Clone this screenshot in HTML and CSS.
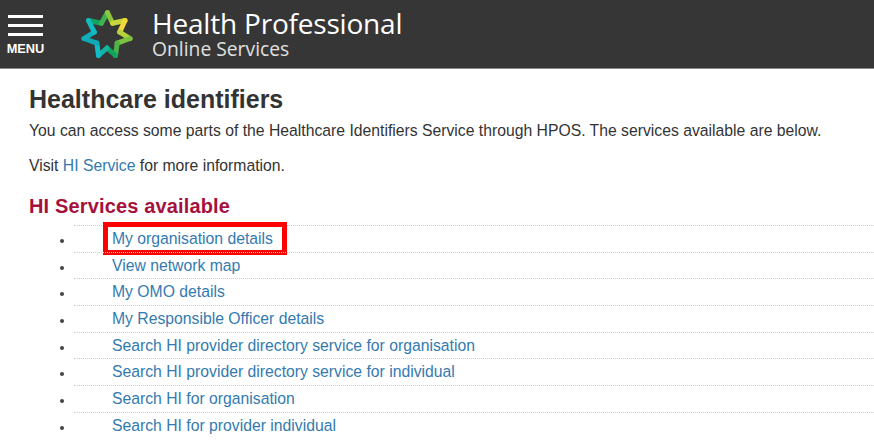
FILE: index.html
```html
<!DOCTYPE html>
<html lang="en">
<head>
<meta charset="utf-8">
<title>Healthcare identifiers</title>
<link rel="stylesheet" href="styles.css">
</head>
<body>
<header class="topbar">
  <div class="menu">
    <span class="menu-bar"></span>
    <span class="menu-bar"></span>
    <span class="menu-bar"></span>
    <span class="menu-label">MENU</span>
  </div>
  <svg class="star" width="54" height="54" viewBox="80 8 54 54" aria-hidden="true">
    <g fill="none" stroke-width="5" stroke-linecap="round">
      <line x1="88.5" y1="20.5" x2="101.4" y2="23.3" stroke="#12a35f"/>
      <line x1="101.4" y1="23.3" x2="107.5" y2="12.5" stroke="#3fb24f"/>
      <line x1="107.5" y1="12.5" x2="112.6" y2="23.3" stroke="#8cc63f"/>
      <line x1="112.6" y1="23.3" x2="125" y2="20.5" stroke="#c8d63a"/>
      <line x1="125" y1="20.5" x2="119.7" y2="32.1" stroke="#f3d83a"/>
      <line x1="119.7" y1="32.1" x2="130" y2="38.5" stroke="#b5d33c"/>
      <line x1="130" y1="38.5" x2="117.2" y2="43.1" stroke="#7cc242"/>
      <line x1="117.2" y1="43.1" x2="115.5" y2="55.5" stroke="#4cb348"/>
      <line x1="115.5" y1="55.5" x2="107" y2="48" stroke="#12a35f"/>
      <line x1="107" y1="48" x2="98.5" y2="55.5" stroke="#12b5a0"/>
      <line x1="98.5" y1="55.5" x2="96.8" y2="43.1" stroke="#10bcc8"/>
      <line x1="96.8" y1="43.1" x2="84" y2="38.5" stroke="#0fa9b5"/>
      <line x1="84" y1="38.5" x2="94.3" y2="32.1" stroke="#10aeb8"/>
      <line x1="94.3" y1="32.1" x2="88.5" y2="20.5" stroke="#13bcc4"/>
    </g>
  </svg>
  <div class="brand">
    <div class="brand-main">Health Professional</div>
    <div class="brand-sub">Online Services</div>
  </div>
</header>
<main class="content">
  <h1 class="title">Healthcare identifiers</h1>
  <p class="intro">You can access some parts of the Healthcare Identifiers Service through HPOS. The services available are below.</p>
  <p class="visit">Visit <a class="link" href="#">HI Service</a> for more information.</p>
  <h2 class="subtitle">HI Services available</h2>
  <ul class="services">
    <li class="service"><a class="link" href="#">My organisation details</a><span class="callout"></span></li>
    <li class="service"><a class="link" href="#">View network map</a></li>
    <li class="service"><a class="link" href="#">My OMO details</a></li>
    <li class="service"><a class="link" href="#">My Responsible Officer details</a></li>
    <li class="service"><a class="link" href="#">Search HI provider directory service for organisation</a></li>
    <li class="service"><a class="link" href="#">Search HI provider directory service for individual</a></li>
    <li class="service"><a class="link" href="#">Search HI for organisation</a></li>
    <li class="service"><a class="link" href="#">Search HI for provider individual</a></li>
  </ul>
</main>
</body>
</html>
```
FILE: styles.css
```css
html, body {
  margin: 0;
  padding: 0;
  height: 100%;
  overflow: hidden;
  background: #fff;
}
body {
  font-family: "Liberation Sans", Arial, sans-serif;
  color: #333;
  font-size: 15.74px;
}
.topbar {
  box-sizing: border-box;
  height: 69px;
  background: #363636;
  border-bottom: 1px solid #8a8a8a;
  display: flex;
  align-items: flex-start;
  padding-left: 6px;
}
.menu {
  width: 39px;
  padding-top: 15px;
  display: flex;
  flex-direction: column;
  align-items: center;
}
.menu-bar {
  display: block;
  width: 35px;
  height: 3px;
  background: #fff;
  margin-bottom: 6px;
}
.menu-label {
  color: #fff;
  font-size: 12.8px;
  font-weight: bold;
  line-height: 14px;
}
.star {
  display: block;
  margin: 8px 18px 0 35px;
}
.brand {
  color: #fff;
  font-family: "Open Sans", sans-serif;
}
.brand-main {
  font-size: 28px;
  letter-spacing: -0.2px;
  line-height: 28px;
  margin-top: 9px;
}
.brand-sub {
  font-size: 19.3px;
  line-height: 24px;
  color: #e0e0e0;
}
.content {
  padding: 16px 0 0 29px;
}
.title {
  margin: 0;
  font-size: 25px;
  line-height: 28px;
  font-weight: bold;
  color: #333;
}
.intro {
  margin: 8px 0 0;
  line-height: 20px;
}
.visit {
  margin: 15px 0 0;
  line-height: 20px;
}
.subtitle {
  margin: 18px 0 0;
  font-size: 20px;
  letter-spacing: 0.15px;
  line-height: 24px;
  font-weight: bold;
  color: #a6113c;
}
.services {
  margin: 7px 0 0 45px;
  padding: 0;
  list-style: disc;
}
.service {
  position: relative;
  height: 26.67px;
  line-height: 26.67px;
  box-sizing: border-box;
  border-top: 1px dotted #cfcfcf;
  padding-left: 38px;
}
.service::marker {
  color: #444;
  font-size: 12px;
}
.link {
  color: #337ab0;
  text-decoration: none;
}
.callout {
  position: absolute;
  left: 29px;
  top: -4px;
  width: 184px;
  height: 33px;
  box-sizing: border-box;
  border: 5px solid #f00;
}
```
